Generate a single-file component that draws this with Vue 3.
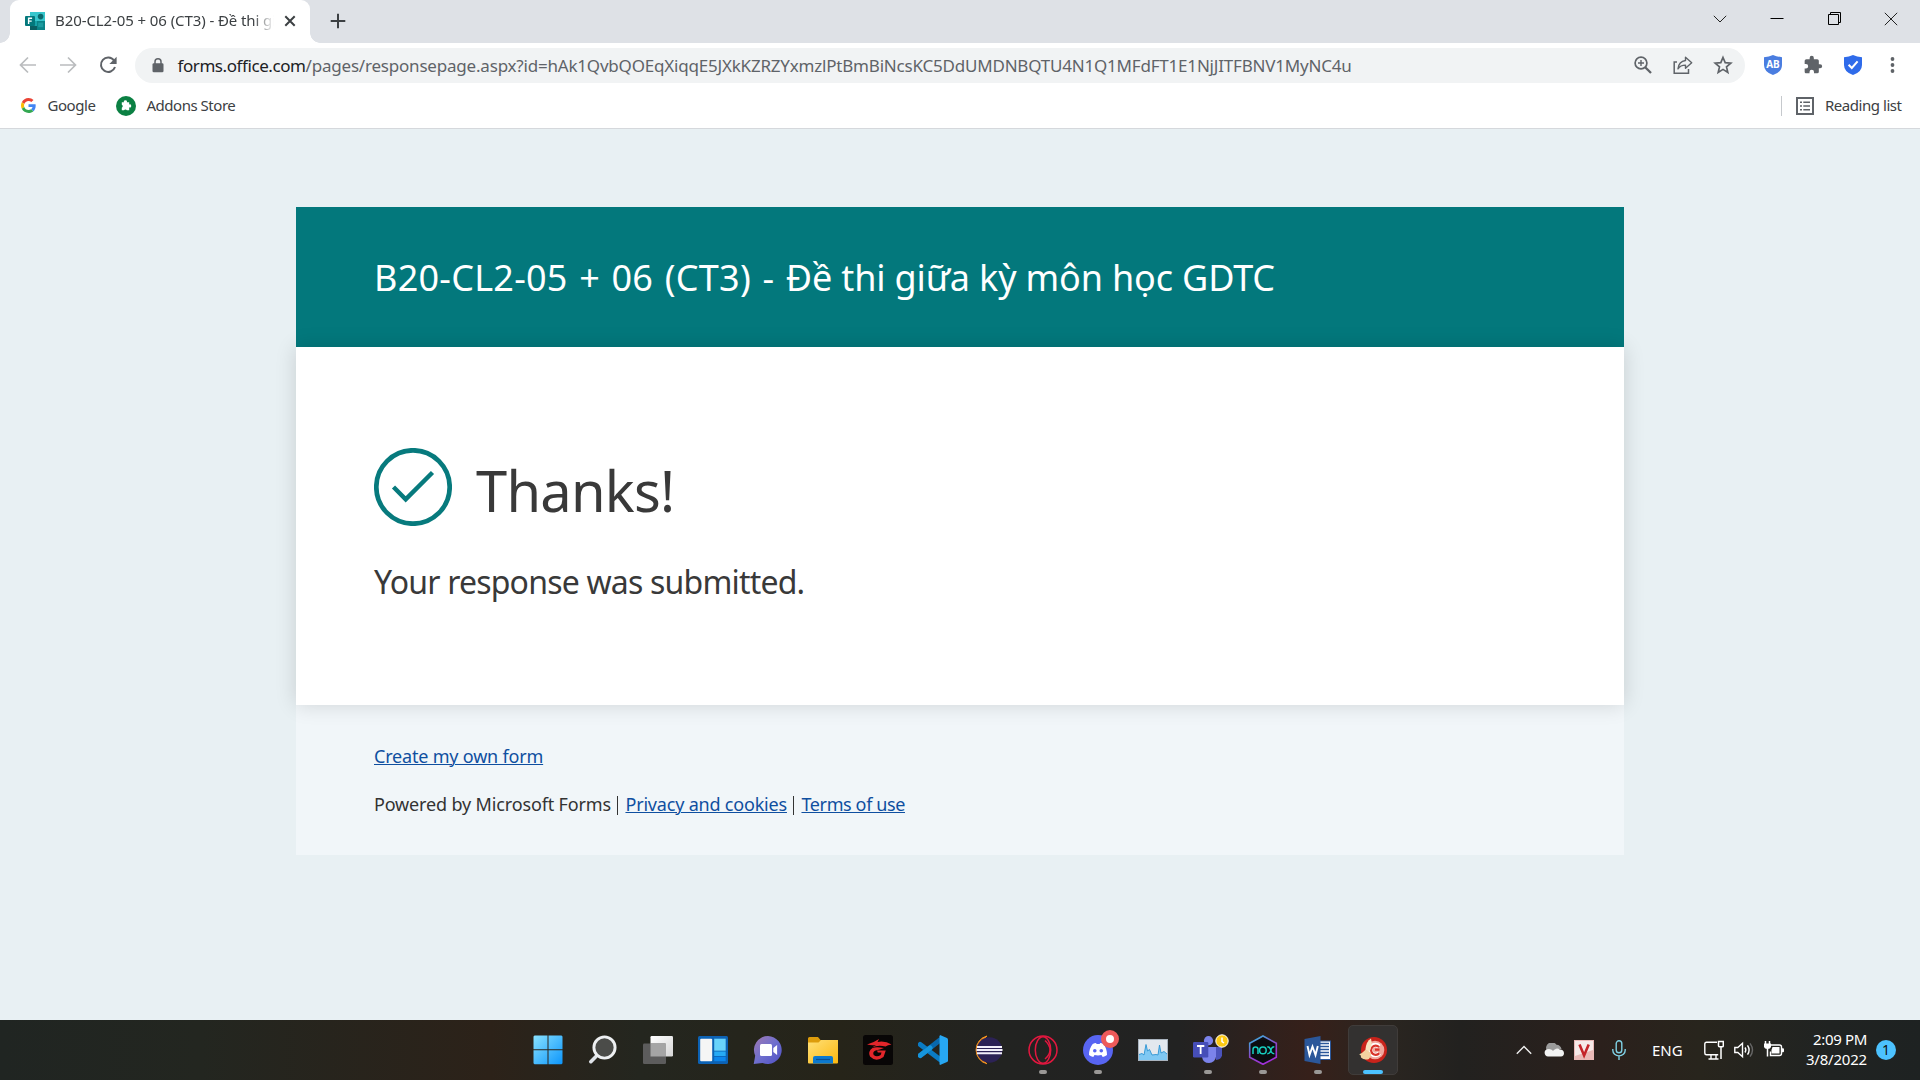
<script setup>
const tabTitle = 'B20-CL2-05 + 06 (CT3) - Đề thi gi'
const classCode = 'B20-CL2-05 + 06 (CT3) -'
const examName = 'Đề thi giữa kỳ môn học GDTC'
const urlHost = 'forms.office.com'
const urlPath =
  '/pages/responsepage.aspx?id=hAk1QvbQOEqXiqqE5JXkKZRZYxmzlPtBmBiNcsKC5DdUMDNBQTU4N1Q1MFdFT1E1NjJITFBNV1MyNC4u'
</script>

<template>
  <div class="screen">
    <header class="tabstrip">
      <div class="tab">
        <svg class="favicon" viewBox="0 0 20 18">
          <path d="M5 0h15v18H5z" fill="#17a2a8" />
          <path d="M5 0h15v9H5z" fill="#36c6cc" />
          <path d="M12 9h8v9h-8z" fill="#0b8387" />
          <path d="M5 14h7v4H5z" fill="#0a5f63" />
          <circle cx="15.6" cy="4.6" r="2.8" fill="#0b6a6e" />
          <rect x="13.2" y="10.6" width="5" height="4.6" fill="#1c9ba0" />
          <rect y="4" width="10" height="10" rx="1" fill="#03787c" />
          <path d="M3.6 12V6.2h3.5M3.6 9.1h3.1" fill="none" stroke="#fff" stroke-width="1.4" />
        </svg>
        <span class="tab-title">{{ tabTitle }}</span>
        <svg class="tab-close" viewBox="0 0 12 12"><path d="M1.3 1.3l9.4 9.4M10.7 1.3l-9.4 9.4" stroke="#3c4043" stroke-width="2" /></svg>
      </div>
      <svg class="new-tab" viewBox="0 0 16 16"><path d="M8 .7v14.6M.7 8h14.6" stroke="#3c4043" stroke-width="2" /></svg>
      <div class="window-buttons">
        <svg viewBox="0 0 14 14"><path d="M.8 3.8L7 10l6.2-6.2" fill="none" stroke="#222" /></svg>
        <svg viewBox="0 0 14 14"><path d="M.5 6.5h13" stroke="#000" /></svg>
        <svg viewBox="0 0 14 14"><path d="M1.500 2.500h10v10h-10zM3.500 2.500v-2h10v10h-2" fill="none" stroke="#000" /></svg>
        <svg viewBox="0 0 14 14"><path d="M.8 .8l12.4 12.4M13.2 .8L.8 13.2" stroke="#222" /></svg>
      </div>
    </header>

    <nav class="toolbar">
      <div class="nav-icons">
        <svg viewBox="0 0 20 20"><path d="M18 10H3M10 2.5L2.5 10l7.5 7.5" fill="none" stroke="#babcbe" stroke-width="1.7" /></svg>
        <svg viewBox="0 0 20 20"><path d="M2 10h15M10 2.5l7.500 7.500-7.500 7.500" fill="none" stroke="#babcbe" stroke-width="1.7" /></svg>
        <svg viewBox="0 0 20 20">
          <path d="M16 5.500A7.200 7.200 0 1 0 17 12" fill="none" stroke="#5f6368" stroke-width="2" />
          <path d="M18.600 1.800v7.200h-7.200z" fill="#5f6368" />
        </svg>
      </div>
      <div class="omnibox">
        <svg class="lock" viewBox="0 0 12 15">
          <rect x=".5" y="5.300" width="11" height="9" rx="1.300" fill="#5f6368" />
          <path d="M3 6V3.800a3 3 0 0 1 6 0V6" fill="none" stroke="#5f6368" stroke-width="1.500" />
        </svg>
        <div class="url"><span class="host">{{ urlHost }}</span><span class="path">{{ urlPath }}</span></div>
        <div class="omni-icons">
          <svg viewBox="0 0 20 20">
            <circle cx="8" cy="8" r="5.900" fill="none" stroke="#5f6368" stroke-width="1.700" />
            <path d="M12.200 12.200l5.800 5.800" stroke="#5f6368" stroke-width="2.300" />
            <path d="M8 5v6M5 8h6" stroke="#5f6368" stroke-width="1.400" />
          </svg>
          <svg viewBox="0 0 20 20">
            <path d="M4 7H1.200v11.300h14.300V14" fill="none" stroke="#5f6368" stroke-width="1.500" />
            <path d="M12.500 2.300l6.200 5.500-6.200 5.500v-3.200c-3.500 0-5.800 1-7.500 3.700.500-4.500 2.800-7.700 7.500-8.300z" fill="none" stroke="#5f6368" stroke-width="1.400" stroke-linejoin="round" />
          </svg>
          <svg viewBox="0 0 20 20">
            <path d="M10 2.500l2.200 5.200 5.600.500-4.300 3.700 1.300 5.500-4.800-3-4.800 3 1.300-5.500-4.300-3.700 5.600-.500z" fill="none" stroke="#5f6368" stroke-width="1.700" />
          </svg>
        </div>
      </div>
      <div class="ext-icons">
        <svg viewBox="0 0 20 20">
          <path d="M1 2.200Q6 1.800 10 0q4 1.800 9 2.200V10q0 7-9 10Q1 17 1 10z" fill="#4a7de0" />
          <text x="10" y="12.900" class="ab">AB</text>
        </svg>
        <svg viewBox="0 0 24 24">
          <path d="M20.500 11H19V7a2 2 0 0 0-2-2h-4V3.500a2.500 2.500 0 0 0-5 0V5H4a2 2 0 0 0-2 2v3.800h1.500a2.700 2.700 0 0 1 0 5.400H2V20c0 1.100.900 2 2 2h3.800v-1.500a2.700 2.700 0 0 1 5.400 0V22H17a2 2 0 0 0 2-2v-4h1.500a2.500 2.500 0 0 0 0-5z" fill="#5f6368" />
        </svg>
        <svg viewBox="0 0 20 20">
          <path d="M1 2.200Q6 1.800 10 0q4 1.800 9 2.200V10q0 7-9 10Q1 17 1 10z" fill="#2f6bea" />
          <path d="M5.600 9.800l3.200 3.200 5.800-6.600" fill="none" stroke="#fff" stroke-width="2" />
        </svg>
        <svg viewBox="0 0 20 20" fill="#5f6368">
          <circle cx="9.500" cy="4" r="1.900" /><circle cx="9.500" cy="10" r="1.900" /><circle cx="9.500" cy="16" r="1.900" />
        </svg>
      </div>
    </nav>

    <div class="bookmarks">
      <svg class="google" viewBox="0 0 48 48">
        <path fill="#ea4335" d="M24 9.500c3.540 0 6.710 1.220 9.210 3.600l6.850-6.850C35.900 2.380 30.470 0 24 0 14.620 0 6.510 5.380 2.560 13.220l7.980 6.190C12.430 13.720 17.740 9.500 24 9.500z" />
        <path fill="#4285f4" d="M46.980 24.550c0-1.570-.150-3.090-.380-4.550H24v9.020h12.940c-.580 2.960-2.260 5.480-4.780 7.180l7.730 6c4.510-4.180 7.090-10.360 7.090-17.650z" />
        <path fill="#fbbc05" d="M10.530 28.590c-.480-1.450-.760-2.990-.760-4.590s.270-3.140.760-4.590l-7.980-6.190C.920 16.460 0 20.120 0 24c0 3.880.920 7.540 2.560 10.780l7.970-6.190z" />
        <path fill="#34a853" d="M24 48c6.480 0 11.930-2.130 15.890-5.810l-7.730-6c-2.150 1.450-4.920 2.300-8.160 2.300-6.260 0-11.570-4.220-13.470-9.910l-7.980 6.190C6.510 42.620 14.620 48 24 48z" />
      </svg>
      <span class="bm-google">Google</span>
      <svg class="addons" viewBox="0 0 20 20">
        <circle cx="10" cy="10" r="10" fill="#0b8043" />
        <path d="M5.800 6.200h2.200a1.500 1.500 0 1 1 2.800 0h2.400v2.300a1.500 1.500 0 1 1 0 2.800v3h-2.300a1.600 1.600 0 0 0-2.900 0H5.800v-2.600a1.600 1.600 0 0 0 0-2.900z" fill="#fff" />
      </svg>
      <span class="bm-addons">Addons Store</span>
      <div class="reading">
        <i class="divider"></i>
        <svg viewBox="0 0 18 18">
          <rect x="1" y="1" width="16" height="16" fill="none" stroke="#5f6368" stroke-width="2" />
          <path d="M4 5.200h2M4 9h2M4 12.800h2M7.300 5.200H14M7.300 9H14M7.300 12.800H14" stroke="#5f6368" stroke-width="1.600" />
        </svg>
        <span>Reading list</span>
      </div>
    </div>

    <main class="page">
      <section class="form">
        <div class="form-head"><h1><span class="code">{{ classCode }}&nbsp;</span><span class="exam">{{ examName }}</span></h1></div>
        <div class="card">
          <div class="thanks">
            <svg viewBox="0 0 78 78">
              <circle cx="39" cy="39" r="36.700" fill="none" stroke="#077a7d" stroke-width="4.700" />
              <path d="M19.500 39L31.700 51.300 58.500 24.500" fill="none" stroke="#077a7d" stroke-width="4.400" />
            </svg>
            <h2>Thanks!</h2>
          </div>
          <p class="submitted">Your response was submitted.</p>
        </div>
        <footer class="form-foot">
          <p><a class="create">Create my own form</a></p>
          <p class="legal">
            <span class="powered">Powered by Microsoft Forms</span><i></i><a class="privacy">Privacy and cookies</a><i></i><a class="terms">Terms of use</a>
          </p>
        </footer>
      </section>
    </main>

    <footer class="taskbar">
      <div class="apps">
        <div class="app">
          <svg viewBox="0 0 30 30">
            <defs><linearGradient id="win" gradientUnits="userSpaceOnUse" x1="0" y1="0" x2="30" y2="30"><stop offset="0" stop-color="#8be3ff" /><stop offset="1" stop-color="#0a94fb" /></linearGradient></defs>
            <path d="M1.500 .5H14.500V14.200H.5V1.500zM15.500 .5H28.500l1 1V14.200h-14zM.5 15.300h14v14H1.500l-1-1zM15.500 15.300h14v13l-1 1h-13z" fill="url(#win)" />
          </svg>
        </div>
        <div class="app">
          <svg viewBox="0 0 30 30">
            <path d="M8 21.500L2.800 26.700" stroke="#dfe3e8" stroke-width="3.600" stroke-linecap="round" />
            <circle cx="16.500" cy="12.500" r="10.600" fill="#4b4c49" stroke="#eef0f2" stroke-width="2.900" />
          </svg>
        </div>
        <div class="app">
          <svg viewBox="0 0 30 30">
            <defs><linearGradient id="tv" x1="0" y1="0" x2="1" y2="1"><stop offset="0" stop-color="#fff" /><stop offset="1" stop-color="#d6d6d6" /></linearGradient></defs>
            <rect x="7.500" y="1" width="22.500" height="20.500" rx="1.200" fill="url(#tv)" />
            <rect x="0" y="8.500" width="23" height="20.500" rx="1.200" fill="#5c5c5c" />
            <path d="M7.500 8.500H23v13H7.500z" fill="#a5a5a5" />
          </svg>
        </div>
        <div class="app">
          <svg viewBox="0 0 30 30">
            <rect y="1" width="30" height="28" rx="1.500" fill="#0c62b4" />
            <rect x="2.200" y="3.700" width="12" height="22.500" rx="1" fill="#f5f5f5" />
            <path d="M16.200 3.700h11.500v12H16.200z" fill="#69d3fb" />
            <path d="M16.200 16.500h11.500v4.500H16.200z" fill="#26aaf5" />
            <path d="M16.200 21.800h11.500v4.400H16.200z" fill="#0c86ec" />
          </svg>
        </div>
        <div class="app">
          <svg viewBox="0 0 30 30">
            <defs><linearGradient id="chat" x1="0" y1="0" x2="1" y2="1"><stop offset="0" stop-color="#a078b0" /><stop offset=".5" stop-color="#6f6fce" /><stop offset="1" stop-color="#4e4fc4" /></linearGradient></defs>
            <path d="M15 1a14 14 0 1 1-5.500 27L.700 29l1.500-8.200A14 14 0 0 1 15 1z" fill="url(#chat)" />
            <rect x="7" y="9" width="12" height="12" rx="1.500" fill="#fff" />
            <path d="M20.300 13l3.800-3v10l-3.800-3z" fill="#fff" />
          </svg>
        </div>
        <div class="app">
          <svg viewBox="0 0 30 30">
            <defs><linearGradient id="folder" x1="0" y1="0" x2="1" y2="1"><stop offset="0" stop-color="#ffe078" /><stop offset="1" stop-color="#fcb80f" /></linearGradient></defs>
            <path d="M0 3.500Q0 2 1.500 2H10l2.500 3H29v4H0z" fill="#dd9c0c" />
            <path d="M0 7.500h10.500L13 5h17v22.500a1 1 0 0 1-1 1H1a1 1 0 0 1-1-1z" fill="url(#folder)" />
            <path d="M5 28.500V23q0-2 2-2h16q2 0 2 2v5.500z" fill="#0c79cf" />
            <path d="M8 24.500h14" stroke="#0a4f94" stroke-width="1.200" />
          </svg>
        </div>
        <div class="app">
          <svg viewBox="0 0 30 30">
            <rect width="30" height="30" rx="2.500" fill="#080606" />
            <path d="M4 9.500Q10 8 16 4l-1.500 3Q22 5.500 28.500 9.500q-4 .3-6 2Q15 9.500 9 12.500q3-2 4-2.500-4.500.7-9-.5z" fill="#e3262b" />
            <path d="M21 13Q13 11.500 9.500 13 4.500 16.500 7 21.500q6 6 13.500.5l2.300-6.500H14l.8 2h3.700l-.8 2.500q-4 2.500-7 0-1.500-3.500 2-4.500 4-1 8.300-2.500z" fill="#e3262b" />
          </svg>
        </div>
        <div class="app">
          <svg viewBox="0 0 30 30">
            <path d="M2.200 9.500L22 24.500" stroke="#0a7bc4" stroke-width="5" stroke-linecap="round" />
            <path d="M2.200 20.500L22 5" stroke="#0868ad" stroke-width="5" stroke-linecap="round" />
            <path d="M2.200 20.500L12 13" stroke="#1695dc" stroke-width="5" stroke-linecap="round" />
            <path d="M22 0l7 3q1 .500 1 1.500v21q0 1-1 1.500l-7 3q-.500-.500-.500-1.200V1.200z" fill="#27a7f2" />
          </svg>
        </div>
        <div class="app">
          <svg viewBox="0 0 30 30">
            <path d="M14 1A14.300 14.300 0 0 0 14 28.800 17 17 0 0 1 14 1z" fill="#f7941e" stroke="#f7941e" />
            <circle cx="16.500" cy="15" r="12.800" fill="#2c2255" />
            <path d="M4 11h25v2H4zM3.500 14h26v2h-26zM4 17.200h25v2H4z" fill="#f3f0fa" />
          </svg>
        </div>
        <div class="app running">
          <svg viewBox="0 0 30 30" fill="none" stroke="#e3173f">
            <circle cx="15" cy="15" r="14" stroke-width="1.500" />
            <ellipse cx="15" cy="15" rx="7.700" ry="13.300" stroke-width="1.500" />
            <path d="M17 5.500Q22 10 22 15t-5 9" stroke-width="1.500" />
          </svg>
        </div>
        <div class="app running">
          <svg viewBox="0 0 30 30">
            <circle cx="15" cy="15" r="15" fill="#5865f2" />
            <path d="M9.700 9Q11.500 8 13 8l.600 1h3l.600-1q1.500 0 3.300 1 3.500 4.500 3.500 11-2 1.700-4.300 2L18.500 20q-3.500.800-7 0l-1.200 2Q8 21.700 6 20q0-6.500 3.700-11z" fill="#fff" />
            <circle cx="11.800" cy="15.800" r="1.800" fill="#5865f2" /><circle cx="18.300" cy="15.800" r="1.800" fill="#5865f2" />
          </svg>
          <b class="rec"></b>
        </div>
        <div class="app">
          <svg viewBox="0 0 30 30">
            <rect x=".5" y="4.500" width="29" height="21" fill="#e3e8ee" stroke="#aab4bf" />
            <path d="M1 19.500l3-1 2 1.500L8 9.500 9.500 16l2-1.500L14 20l4-.5 2 .5 1.500-10L23 18l3-1.500 3 2.500v6H1z" fill="#7fc8f3" />
            <path d="M1 19.500l3-1 2 1.500L8 9.500 9.500 16l2-1.500L14 20l4-.5 2 .5 1.500-10L23 18l3-1.500 3 2.500" fill="none" stroke="#2b93d2" stroke-width=".9" />
          </svg>
        </div>
        <div class="app running">
          <svg viewBox="0 0 30 30">
            <circle cx="15.500" cy="5.700" r="4.600" fill="#7b83eb" />
            <path d="M21 12h8v8.500q-1 4-6 4.500z" fill="#4b53bc" />
            <path d="M9 12h14v9.500Q22 28 16 28t-7-6z" fill="#7b83eb" />
            <rect x="0" y="7" width="15.300" height="15.500" rx="1.200" fill="#464eb8" />
            <path d="M4 11h7.300M7.650 11v8" stroke="#fff" stroke-width="1.800" />
          </svg>
          <svg class="clock" viewBox="0 0 14 14"><circle cx="7" cy="7" r="6.200" fill="#fcc914" stroke="#fff" stroke-width="1" /><path d="M7 3.500v4L9 9" fill="none" stroke="#fff" stroke-width="1.500" /></svg>
        </div>
        <div class="app running">
          <svg viewBox="0 0 30 30">
            <defs><linearGradient id="nox" x1=".2" y1="0" x2=".7" y2="1"><stop offset="0" stop-color="#38b4e0" /><stop offset=".5" stop-color="#8a49c8" /><stop offset="1" stop-color="#a62bdc" /></linearGradient></defs>
            <path d="M15 1l13.300 7.300v14L15 29.300 1.700 22.300v-14z" fill="#0b0d10" stroke="url(#nox)" stroke-width="1.600" />
            <path d="M5 19v-4.500q0-2.500 2.500-2.500T10 14.500V19M19.300 11.800q2.200 0 3 2l1 3q.8 2 3 2M26.300 11.800q-2.200 0-3 2l-1 3q-.8 2-3 2" fill="none" stroke="#17cfc0" stroke-width="1.500" />
            <circle cx="14.900" cy="15.400" r="3.300" fill="none" stroke="#17cfc0" stroke-width="1.500" />
          </svg>
        </div>
        <div class="app running">
          <svg viewBox="0 0 30 30">
            <rect x="14" y="6" width="13.500" height="18.500" fill="#fff" stroke="#2b579a" />
            <path d="M16 8.500h10M16 11.500h10M16 14.500h10M16 17.500h10M16 20.500h10" stroke="#2b579a" stroke-width="1.500" />
            <path d="M1.500 4L17.500 1v28l-16-3z" fill="#2b579a" />
            <path d="M4.500 11l2 9L9.500 11.500l3 8.500 2.300-9" fill="none" stroke="#fff" stroke-width="1.900" />
          </svg>
        </div>
        <div class="app running active">
          <svg viewBox="0 0 30 30">
            <circle cx="16" cy="15" r="13" fill="#c9231b" />
            <circle cx="17" cy="15" r="9.300" fill="#f0a79d" />
            <path d="M21 11.600a5 5 0 1 0 .2 6.600" fill="none" stroke="#fff" stroke-width="4.600" />
            <path d="M21 12a4.600 4.600 0 1 0 .2 6.200M21.500 14.700h-4.500" fill="none" stroke="#d9332a" stroke-width="2.200" />
            <path d="M13 3.500q-5 3-5.500 11l3.500 2.500q4-6 2-13.500z" fill="#f7e3c0" />
            <path d="M7.800 14.500Q4 18.500 1.200 19.300q2.300 1 1.800 3.200 3 3 8 1.500 2.500-2.500 2-6z" fill="#f2d3a0" />
          </svg>
        </div>
      </div>
      <div class="tray">
        <svg class="chev" viewBox="0 0 16 10"><path d="M.8 8.800L8 1.500l7.200 7.300" fill="none" stroke="#eee" stroke-width="1.400" /></svg>
        <svg class="cloud" viewBox="0 0 20 14">
          <path d="M3 8a5.500 5.500 0 0 1 9.500-6.200A5.500 5.500 0 0 1 17.500 6z" fill="#9b9b9b" />
          <path d="M4 13.500a3.800 3.800 0 0 1-1-7.300q3.500-1 6 1.300l3-1.800q2-.8 3.700.8 4.300.2 4.300 3.800 0 3-3 3.200z" fill="#f2f2f2" />
        </svg>
        <svg class="uni" viewBox="0 0 20 20">
          <rect width="20" height="20" fill="#e9b9b7" /><path d="M1 1h18v9L1 16z" fill="#f6e9e8" />
          <path d="M5.500 4.500l4.600 11 4.600-11" fill="none" stroke="#c4242a" stroke-width="2.600" />
        </svg>
        <svg class="mic" viewBox="0 0 14 20">
          <rect x="4.200" y=".8" width="5.600" height="12" rx="2.800" fill="none" stroke="#7fd0e4" stroke-width="1.400" />
          <path d="M.8 9v1.300a6.200 5.600 0 0 0 12.400 0V9M7 16v4" fill="none" stroke="#7fd0e4" stroke-width="1.400" />
        </svg>
        <span class="lang">ENG</span>
        <svg class="net" viewBox="0 0 20 20" fill="none" stroke="#fff">
          <path d="M13 2.200H2.500Q.8 2.200.8 4v9q0 1.800 1.700 1.800h11.700" stroke-width="1.400" />
          <path d="M4.500 19h10M7 15v3.500M12 15v3.500" stroke-width="1.400" />
          <path d="M14.500 1.500h4.800v4.300q0 1-1 1h-2.800q-1 0-1-1zM17 7v12" stroke-width="1.500" />
        </svg>
        <svg class="vol" viewBox="0 0 20 20" fill="none" stroke="#fff" stroke-width="1.400">
          <path d="M.8 7.500h3L8.500 3.300v13.400L3.800 12.500h-3z" />
          <path d="M11 7.500q1.700 2.500 0 5M13.500 5.300q3.200 4.700 0 9.400" />
          <path d="M16 3.300q5 6.700 0 13.400" stroke="#666" />
        </svg>
        <svg class="bat" viewBox="0 0 20 20">
          <path d="M7 5h8.500q2 0 2 2v6.500q0 2-2 2H6.500v-4" fill="none" stroke="#fff" stroke-width="1.400" />
          <path d="M8.500 7h7v6.500h-8V10z" fill="#fff" /><path d="M18 8.200h1q1 0 1 1v2q0 1-1 1h-1z" fill="#fff" />
          <path d="M1.500 1v3M5.500 1v3M3.500 8v8.500" stroke="#fff" stroke-width="1.500" /><path d="M0 3.500h7V7Q6.500 9 3.500 9T0 7z" fill="#fff" />
        </svg>
        <div class="datetime"><span class="time">2:09 PM</span><span class="date">3/8/2022</span></div>
        <span class="badge">1</span>
      </div>
    </footer>
  </div>
</template>

<style>
body { margin: 0; overflow: hidden; }
</style>

<style scoped>
.screen {
  width: 1920px; height: 1080px; display: flex; flex-direction: column; overflow: hidden;
  font-family: "Noto Sans", "Open Sans", sans-serif; font-size: 15px; color: #3c4043; background: #fff;
}
svg { display: block; flex: none; }
h1, h2, p { margin: 0; font-weight: 400; }
span, a { white-space: nowrap; }

.tabstrip { height: 43px; flex: none; background: #dee1e6; display: flex; position: relative; }
.tab {
  position: relative; margin-left: 10px; width: 300px; height: 43px; box-sizing: border-box; background: #fff;
  border-radius: 9px 9px 0 0; display: flex; padding-left: 15px;
}
.tab::before, .tab::after { content: ""; position: absolute; bottom: 0; width: 10px; height: 10px; }
.tab::before { left: -10px; background: radial-gradient(circle at 0 0, transparent 9.5px, #fff 10px); }
.tab::after { right: -10px; background: radial-gradient(circle at 100% 0, transparent 9.5px, #fff 10px); }
.favicon { width: 20px; height: 18px; margin-top: 12px; }
.tab-title {
  margin: 8px 0 0 10px; width: 219px; height: 26px; line-height: 24px; letter-spacing: -.090px;
  -webkit-mask-image: linear-gradient(90deg, #000 198px, transparent 219px);
  mask-image: linear-gradient(90deg, #000 198px, transparent 219px);
}
.tab-close { width: 12px; height: 12px; margin: 15px 0 0 10px; }
.new-tab { width: 16px; height: 16px; margin: 13px 0 0 19.500px; }
.window-buttons { margin-left: auto; padding: 12px 22px 0 0; display: flex; gap: 43px; }
.window-buttons svg { width: 14px; height: 14px; }

.toolbar { height: 47px; flex: none; display: flex; align-items: flex-start; }
.nav-icons { display: flex; gap: 20px; margin: 12px 0 0 17.500px; width: 117.500px; }
.nav-icons svg { width: 20px; height: 20px; }
.omnibox { margin-top: 5px; width: 1610px; height: 35px; border-radius: 18px; background: #f1f3f4; display: flex; }
.lock { width: 12px; height: 15px; margin: 10px 0 0 16.500px; }
.url { margin-left: 14px; line-height: 35px; font-size: 17px; color: #5f6368; }
.host { color: #202124; letter-spacing: -.42px; }
.path { letter-spacing: -.2px; }
.omni-icons { margin: 7px 12.500px 0 auto; display: flex; gap: 20px; }
.omni-icons svg, .ext-icons svg { width: 20px; height: 20px; }
.ext-icons { display: flex; gap: 20px; margin: 12px 0 0 17.500px; }
.ab { font: 700 10px "Noto Sans", sans-serif; fill: #fff; text-anchor: middle; }

.bookmarks { height: 38px; flex: none; display: flex; border-bottom: 1px solid #d5d8dc; line-height: 24px; }
.bookmarks span { margin-top: 3px; }
.google { width: 15px; height: 15px; margin: 8px 0 0 20.500px; }
.bm-google { margin-left: 12px; letter-spacing: -.44px; width: 68.500px; }
.addons { width: 20px; height: 20px; margin-top: 6px; }
.bm-addons { margin-left: 10.500px; letter-spacing: -.480px; }
.reading { margin-left: auto; display: flex; width: 139px; }
.divider { width: 1px; height: 20px; margin: 6px 14px 0 0; background: #c6c9cd; }
.reading svg { width: 18px; height: 18px; margin: 6.500px 11px 0 0; }
.reading span { letter-spacing: -.460px; }

.page { flex: 1; background: #e8f0f3; display: flex; justify-content: center; align-items: flex-start; }
.form { width: 1328px; margin-top: 78px; }
.form-head { height: 140px; box-sizing: border-box; padding: 41px 78px 0; background: #03787c; }
.form-head h1 { font-size: 36px; line-height: 60px; color: #fff; white-space: nowrap; }
.code { letter-spacing: .250px; word-spacing: 1.900px; }
.exam { letter-spacing: -.150px; }
.card {
  position: relative; height: 358px; box-sizing: border-box; padding: 101px 78px 0; background: #fff; color: #393939;
  box-shadow: 0 0 20px rgba(0, 0, 0, .14);
}
.thanks { display: flex; height: 82px; gap: 24px; }
.thanks svg { width: 78px; height: 78px; }
.thanks h2 { margin-top: 2px; font-size: 56px; line-height: 80px; letter-spacing: -.750px; }
.submitted { margin-top: 30px; font-size: 32px; line-height: 44px; letter-spacing: -.800px; }
.form-foot {
  height: 150px; box-sizing: border-box; padding: 39px 78px 0; background: #f1f6f9; font-size: 18px; line-height: 24px;
  color: #333;
}
.form-foot a { color: #0f4fa0; text-decoration: underline; text-decoration-thickness: 1px; text-underline-offset: 1px; }
.create { letter-spacing: -.190px; }
.legal { display: flex; margin-top: 24px; }
.legal i { width: 1px; height: 19px; margin: 4px 7px 0 6.500px; background: #333; }
.powered { letter-spacing: -.150px; }
.privacy { letter-spacing: -.191px; }
.terms { letter-spacing: -.385px; }

.taskbar {
  height: 60px; flex: none; display: flex; color: #fff;
  background: linear-gradient(90deg, #202522 0, #232620 200px, #2c2219 490px, #24261f 640px, #262419 840px, #222321 1000px, #222 1180px, #36201a 1310px, #2a2520 1390px, #22211f 1460px, #2b201c 1600px, #28251d 1700px, #202322 1830px, #1e2222 100%);
}
.apps { display: flex; margin-left: 520.500px; }
.app { position: relative; width: 55px; display: flex; justify-content: center; padding-top: 15px; box-sizing: border-box; }
.app > svg { width: 30px; height: 30px; position: relative; }
.running::after { content: ""; position: absolute; left: 23.500px; top: 50px; width: 8px; height: 4px; border-radius: 2px; background: #9a9896; }
.active::before {
  content: ""; position: absolute; left: 2.500px; top: 5px; width: 48px; height: 48px; border: 1px solid #403c3a;
  border-radius: 5px; background: #333130;
}
.active::after { left: 17.500px; width: 20px; background: #4cc2ff; }
.rec { position: absolute; left: 30px; top: 10px; width: 8px; height: 8px; border: 5px solid #ed5a5a; border-radius: 50%; background: #fff; }
.app > .clock { position: absolute; left: 34.500px; top: 14px; width: 14px; height: 14px; }
.tray { display: flex; margin-left: 115.500px; }
.chev { width: 16px; height: 10px; margin-top: 25px; }
.cloud { width: 20px; height: 14px; margin: 23px 0 0 12px; }
.uni { width: 20px; height: 20px; margin: 20px 0 0 10px; }
.mic { width: 14px; height: 20px; margin: 20px 0 0 18px; }
.lang { margin: 18px 0 0 26px; line-height: 24px; width: 52px; letter-spacing: -.050px; }
.net, .vol, .bat { width: 20px; height: 20px; margin: 20px 10px 0 0; }
.datetime { width: 74px; margin: 9px 0 0 -1px; display: flex; flex-direction: column; align-items: flex-end; line-height: 20px; }
.time { letter-spacing: -.334px; }
.date { letter-spacing: -.205px; }
.badge {
  width: 20px; height: 20px; margin: 20px 0 0 9px; border-radius: 50%; background: #4cc2ff; color: #111; font-size: 14px;
  line-height: 20px; text-align: center;
}
</style>
